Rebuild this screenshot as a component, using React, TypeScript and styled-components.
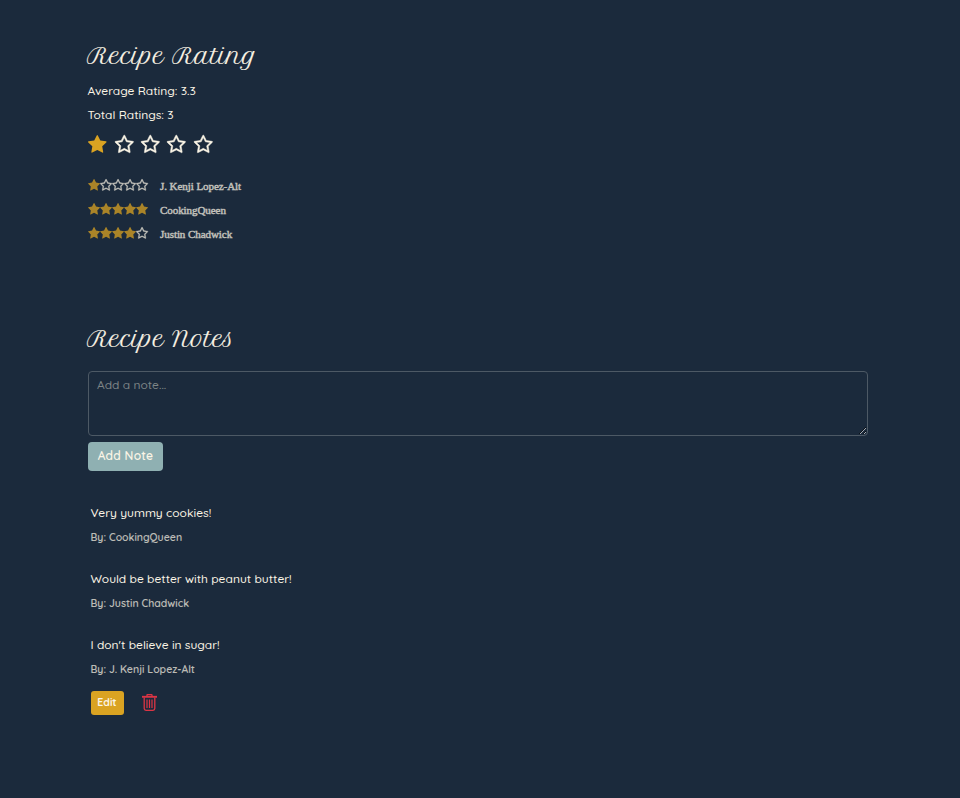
import React from "react";
import styled, { createGlobalStyle } from "styled-components";

const GlobalStyle = createGlobalStyle`
  *, *::before, *::after { box-sizing: border-box; }
  body {
    margin: 0;
    background: #1b2a3c;
    color: #fbf5e6;
    font: 500 12px/24px Quicksand, Lato, sans-serif;
  }
  h2, p { margin: 0; }
`;

const Page = styled.main`
  min-height: 798px;
  padding: 37px 92px 0 87px;
`;

const RatingSection = styled.section`
  height: 283px;
`;

const Title = styled.h2`
  height: 42px;
  font: 400 22px/38px "Petit Formal Script", "Liberation Serif", serif;
  letter-spacing: -0.05px;
  -webkit-text-stroke: 0.2px currentColor;
  white-space: nowrap;
`;

const Line = styled.p`
  white-space: nowrap;
`;

const Summary = styled.div`
  padding-left: 0.5px;
`;

const StarPicker = styled.div`
  display: flex;
  gap: 7.8px;
  height: 46px;
  padding: 8px 0 0 1.4px;
`;

const Review = styled.div`
  display: flex;
  align-items: center;
  gap: 12px;
  height: 24px;
  opacity: 0.75;
`;

const SmallStars = styled.div`
  display: flex;
  width: 61px;
  padding: 0 0 0.5px 0.5px;
`;

const StarSvg = styled.svg<{ $width: number }>`
  display: block;
  flex: none;
  width: ${(p) => p.$width}px;
  height: ${(p) => (p.$width * 1587) / 1664}px;
  overflow: visible;
`;

const Reviewer = styled.span`
  padding-top: 2px;
  font: 400 11px/24px "Liberation Serif", serif;
  letter-spacing: -0.06px;
  -webkit-text-stroke: 0.4px currentColor;
`;

const NoteInput = styled.textarea`
  display: block;
  width: 780px;
  height: 65px;
  margin: 9px 0 6px 1px;
  padding: 3px 8px;
  resize: both;
  color: inherit;
  font: inherit;
  line-height: 20px;
  background: transparent;
  border: 1px solid #4d5965;
  border-radius: 4px;
  outline: none;
  &::placeholder { color: #7d8486; opacity: 1; }
`;

const AddButton = styled.button`
  display: block;
  width: 75px;
  height: 29px;
  margin-left: 1px;
  padding: 0 0 2px;
  border: 0;
  border-radius: 4px;
  background: #8fb0b2;
  color: #fbf5e6;
  font: 600 12px/27px Quicksand, Lato, sans-serif;
  letter-spacing: 0.25px;
`;

const NoteList = styled.div`
  display: grid;
  gap: 18px;
  padding: 30px 0 0 3.5px;
`;

const Note = styled.article``;

const Author = styled.p`
  font-size: 10.5px;
  font-weight: 600;
  opacity: 0.72;
`;

const Actions = styled.div`
  display: flex;
  align-items: center;
  gap: 18.5px;
  padding-top: 10px;
`;

const EditButton = styled.button`
  width: 33px;
  height: 24px;
  padding: 0 0 2px;
  border: 0;
  border-radius: 3px;
  background: #daa322;
  color: #fbf5e6;
  font: 700 10.5px/22px Quicksand, Lato, sans-serif;
`;

const TrashSvg = styled.svg`
  width: 15px;
  height: 17px;
  margin-top: -1px;
  fill: none;
  stroke: #dc3545;
  stroke-width: 1.3px;
`;

const STAR =
  "M1664 647q0 22-26 48l-363 354 86 500q1 7 1 20 0 21-10.500 35.500t-30.500 14.500q-19 0-40-12l-449-236-449 236q-22 12-40 12-21 0-31.500-14.500t-10.500-35.500q0-6 2-20l86-500-364-354q-25-27-25-48 0-37 56-46l502-73 225-455q19-41 49-41t49 41l225 455 502 73q56 9 56 46z";
const STAR_LINE =
  "M1137 1004l306-297-422-62-189-382-189 382-422 62 306 297-73 421 378-199 377 199z" + STAR;

function Star({ on, width }: { on: boolean; width: number }) {
  const color = on ? "#daa322" : "#fbf5e6";
  return (
    <StarSvg $width={width} viewBox="0 32 1664 1587">
      <path
        d={on ? STAR : STAR_LINE}
        fill={color}
        fillRule="evenodd"
        stroke={color}
        strokeWidth={on ? 0 : 45}
      />
    </StarSvg>
  );
}

function Trash() {
  return (
    <TrashSvg viewBox="0 0 15 17">
      <path d="M5 2V1.200Q5 .7 5.500 .7H9.500Q10 .7 10 1.200V2" />
      <path d="M0 2.800H15" strokeWidth={1.9} />
      <path d="M2.200 3.500V14.500Q2.200 16.300 4 16.300H11Q12.800 16.300 12.800 14.500V3.500" />
      <path d="M5 5.500V14M7.500 5.500V14M10 5.500V14" strokeWidth={1.2} />
    </TrashSvg>
  );
}

const positions = [1, 2, 3, 4, 5];
const reviews = [
  { name: "J. Kenji Lopez-Alt", stars: 1 },
  { name: "CookingQueen", stars: 5 },
  { name: "Justin Chadwick", stars: 4 },
];
const notes = [
  { text: "Very yummy cookies!", by: "CookingQueen", own: false },
  { text: "Would be better with peanut butter!", by: "Justin Chadwick", own: false },
  { text: "I don't believe in sugar!", by: "J. Kenji Lopez-Alt", own: true },
];

export default function App() {
  return (
    <Page>
      <GlobalStyle />
      <RatingSection>
        <Title>Recipe Rating</Title>
        <Summary>
          <Line>Average Rating: 3.3</Line>
          <Line>Total Ratings: 3</Line>
        </Summary>
        <StarPicker>
          {positions.map((n) => <Star key={n} on={n <= 1} width={18.57} />)}
        </StarPicker>
        {reviews.map((r) => (
          <Review key={r.name}>
            <SmallStars>
              {positions.map((n) => <Star key={n} on={n <= r.stars} width={12.1} />)}
            </SmallStars>
            <Reviewer>{r.name}</Reviewer>
          </Review>
        ))}
      </RatingSection>
      <section>
        <Title>Recipe Notes</Title>
        <NoteInput placeholder="Add a note..." />
        <AddButton>Add Note</AddButton>
        <NoteList>
          {notes.map((n) => (
            <Note key={n.by}>
              <Line>{n.text}</Line>
              <Author>By: {n.by}</Author>
              {n.own && (
                <Actions>
                  <EditButton>Edit</EditButton>
                  <Trash />
                </Actions>
              )}
            </Note>
          ))}
        </NoteList>
      </section>
    </Page>
  );
}
